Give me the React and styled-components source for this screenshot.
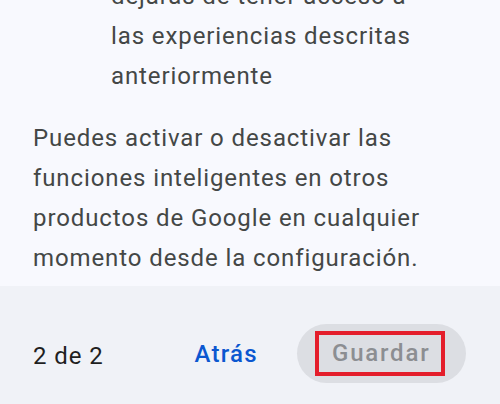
import React from "react";
import styled, { createGlobalStyle } from "styled-components";

const GlobalStyle = createGlobalStyle`
  html, body {
    margin: 0;
    padding: 0;
    background: #f8f9fe;
  }
  body {
    font-family: Roboto, "Noto Sans", "Liberation Sans", sans-serif;
  }
`;

const Screen = styled.div`
  width: 500px;
  height: 404px;
  overflow: hidden;
  display: flex;
  flex-direction: column;
  background: #f8f9fe;
`;

const Content = styled.div`
  flex: 1;
  padding: 0 20px 8px 33px;
  margin-top: -24px;
  color: #444746;
  font-size: 24px;
  line-height: 40px;
  letter-spacing: 0.9px;
`;

const Indented = styled.p`
  margin: 0;
  padding-left: 78px;
`;

const Paragraph = styled.p`
  margin: 22px 0 0 0;
`;

const Footer = styled.div`
  height: 118px;
  box-sizing: border-box;
  background: #f0f2f7;
  display: flex;
  align-items: center;
  padding: 17px 34px 0 33px;
  letter-spacing: 0.9px;
`;

const Counter = styled.span`
  flex: 1;
  color: #1f1f1f;
  font-size: 24px;
  padding-top: 4px;
`;

const TextButton = styled.button`
  border: none;
  background: none;
  padding: 0;
  margin-right: 39px;
  font-family: inherit;
  font-size: 24px;
  font-weight: 500;
  letter-spacing: 1.3px;
  color: #0b57d0;
`;

const PillButton = styled.button`
  border: none;
  background: #dcdee3;
  border-radius: 30px;
  height: 59px;
  width: 169px;
  box-sizing: border-box;
  padding: 0 0 0 18px;
  display: flex;
  align-items: center;
  font-family: inherit;
  font-size: 24px;
  font-weight: 500;
  letter-spacing: 1.8px;
  color: #8c8e92;
`;

const Highlight = styled.span`
  display: inline-block;
  box-sizing: border-box;
  width: 130px;
  height: 45px;
  border: 4px solid #e41e2b;
  line-height: 37px;
  padding-left: 13px;
  text-align: left;
  white-space: nowrap;
`;

export default function App() {
  return (
    <Screen>
      <GlobalStyle />
      <Content>
        <Indented>
          dejarás de tener acceso a
          <br />
          las experiencias descritas
          <br />
          anteriormente
        </Indented>
        <Paragraph>
          Puedes activar o desactivar las
          <br />
          funciones inteligentes en otros
          <br />
          productos de Google en cualquier
          <br />
          momento desde la configuración.
        </Paragraph>
      </Content>
      <Footer>
        <Counter>2 de 2</Counter>
        <TextButton>Atrás</TextButton>
        <PillButton>
          <Highlight>Guardar</Highlight>
        </PillButton>
      </Footer>
    </Screen>
  );
}
